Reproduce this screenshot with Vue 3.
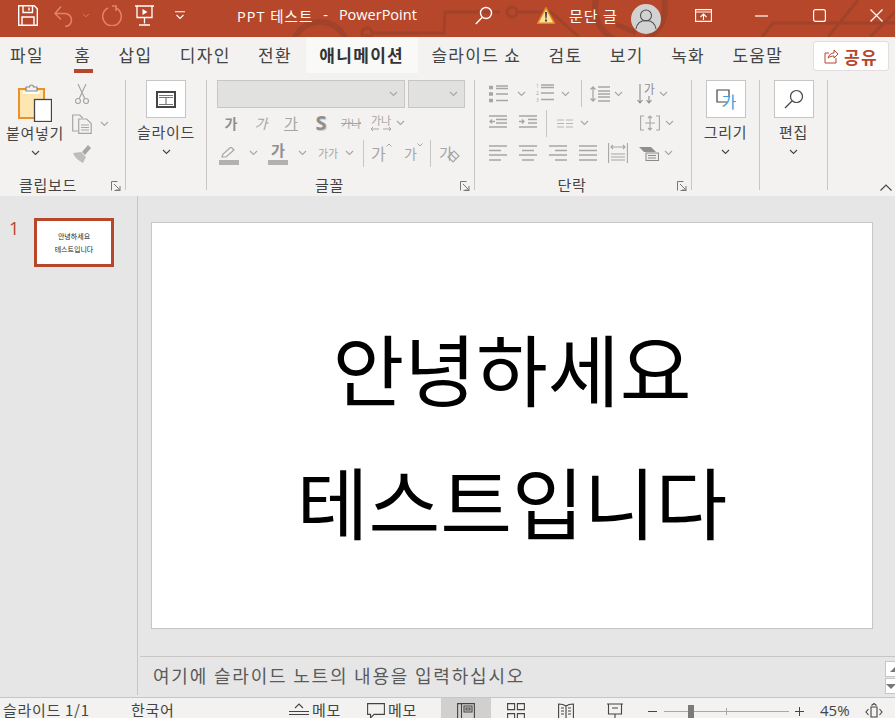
<script setup>
const tabs = [
  { label: '파일' }, { label: '홈', current: true }, { label: '삽입' }, { label: '디자인' }, { label: '전환' },
  { label: '애니메이션', active: true }, { label: '슬라이드 쇼' }, { label: '검토' }, { label: '보기' }, { label: '녹화' }, { label: '도움말' }
]
</script>

<template>
  <div class="app">
    <svg class="sprite" width="0" height="0">
      <symbol id="chev" viewBox="0 0 9 6"><path d="M1 1l3.5 3.5L8 1" fill="none" stroke="currentColor" stroke-width="1.1"/></symbol>
      <symbol id="launch" viewBox="0 0 10 10"><path d="M.5 9.5V.5h6M3 3l5.5 5.5M5 9h4V5M9.5 9.5h-6" fill="none" stroke="currentColor"/></symbol>
    </svg>

    <header class="titlebar">
      <svg class="circuit" width="895" height="37" viewBox="0 0 895 37" fill="none" stroke="#a0432a" stroke-width="3">
        <circle cx="320" cy="50" r="28" stroke-width="6"/>
        <path d="M367 37v-3M372 33h72l1-21h55M517 12h34l28 25"/>
        <circle cx="367" cy="33" r="5"/>
        <circle cx="512" cy="12" r="5"/>
        <circle cx="630" cy="8" r="35" stroke-width="6"/>
        <path d="M616 24l20 9" stroke-width="5"/>
        <path d="M762 37l11-14h122M828 37l30-37M870 37l25-25"/>
      </svg>
      <svg class="ti ti-save" width="20" height="21" viewBox="0 0 20 21" fill="none" stroke="#fff" stroke-width="1.4"><path d="M.7.7h15.6l3 3v16.600H.7zM5 .7v6.800h9.500V.7M4 20v-8h12v8M11 2.500v3"/></svg>
      <svg class="ti ti-undo" width="19" height="22" viewBox="0 0 19 22" fill="none" stroke="#e2836b" stroke-width="1.5"><path d="M1 8.500h10a6.500 6.500 0 0 1 0 13M7 1.500L1 8.500l6 6"/></svg>
      <svg class="ti ti-uc" width="8" height="5" viewBox="0 0 9 6" color="#e2836b"><use href="#chev"/></svg>
      <svg class="ti ti-redo" width="21" height="21" viewBox="0 0 21 21" fill="none" stroke="#e2836b" stroke-width="1.500"><path d="M10 1h5M14 1v5M14 3a9.300 9.300 0 1 1-8 0"/></svg>
      <svg class="ti ti-pres" width="19" height="21" viewBox="0 0 19 21" fill="none" stroke="#fff" stroke-width="1.300"><path d="M0 1h19M2 1v11.500h15V1M9.500 12.500v6M4 20h11"/><path d="M7.500 4l5 3-5 3z" fill="#fff" stroke="none"/></svg>
      <svg class="ti ti-more" width="10" height="9" viewBox="0 0 10 9" fill="none" stroke="#fff" stroke-width="1.100"><path d="M0 .7h10M1.500 4l3.500 3.500L8.500 4"/></svg>
      <div class="doc-title"><span class="doc-name">PPT 테스트</span><span class="dash">-</span><span>PowerPoint</span></div>
      <svg class="ti ti-search" width="18" height="19" viewBox="0 0 18 19" fill="none" stroke="#fff" stroke-width="1.400"><circle cx="11" cy="7" r="5.500"/><path d="M7 11.500L.8 18"/></svg>
      <svg class="ti ti-warn" width="18" height="17" viewBox="0 0 18 17"><path d="M9 .8l8.300 15.400H.7z" fill="#fce29a" stroke="#e08a1e" stroke-width="1.500"/><path d="M8 5h2l-.4 6.500H8.400zM8 12.500h2v2H8z" fill="#3c3c3c"/></svg>
      <span class="warn-text">문단 글</span>
      <div class="avatar">
        <svg width="30" height="30" viewBox="0 0 30 30" fill="none" stroke="#4f4f4f" stroke-width="1.100"><circle cx="15" cy="11.500" r="5.500"/><path d="M5 25c1-6 5-8.500 10-8.500s9 2.500 10 8.500"/></svg>
      </div>
      <svg class="ti ti-disp" width="17" height="13" viewBox="0 0 17 13" fill="none" stroke="#fff" stroke-width="1.100"><path d="M.6.600h15.800v11.800H.6zM.6 3h15.800" /><path d="M8.500 11V5.500M5.500 8l3-3 3 3"/></svg>
      <svg class="ti ti-min" width="13" height="2" viewBox="0 0 13 2"><path d="M0 1h13" stroke="#fff" stroke-width="1.200"/></svg>
      <svg class="ti ti-max" width="13" height="13" viewBox="0 0 13 13" fill="none" stroke="#fff" stroke-width="1.200"><rect x=".6" y=".6" width="11.800" height="11.800" rx="2"/></svg>
      <svg class="ti ti-close" width="13" height="13" viewBox="0 0 13 13" fill="none" stroke="#fff" stroke-width="1.200"><path d="M.5.500l12 12M12.500.500l-12 12"/></svg>
    </header>

    <nav class="tabs">
      <div v-for="tab in tabs" :key="tab.label" class="tab" :class="{ active: tab.active, current: tab.current }">{{ tab.label }}</div>
      <button class="share">
        <svg width="15" height="15" viewBox="0 0 15 15" fill="none" stroke="#b7472a" stroke-width="1"><path d="M5 4H1v10h11V9M4 9c1-3 3-5 6-5V1l4 4-4 4V7c-2 0-4 .5-6 2z"/></svg>
        공유
      </button>
    </nav>

    <section class="ribbon">
      <div class="group g-clip">
        <div class="body clip-body">
          <div class="big">
            <svg class="paste" width="34" height="38" viewBox="0 0 34 38">
              <rect x="1" y="5" width="25" height="29" fill="#fde6b0" stroke="#e8912d" stroke-width="2"/>
              <path d="M5 7h17v3H5z" fill="#fff"/>
              <path d="M8 7V3h3.500a2 2 0 0 1 4 0H19v4z" fill="#f3f2f1" stroke="#8a8886" stroke-width="1.200"/>
              <rect x="16.500" y="15.500" width="17" height="22" fill="#fff" stroke="#444" stroke-width="1.300"/>
            </svg>
            <span class="big-label paste-label">붙여넣기</span>
            <svg class="bchev"><use href="#chev"/></svg>
          </div>
          <div class="clip-small">
            <svg width="14" height="20" viewBox="0 0 14 20" fill="none" stroke="#a6a6a6" stroke-width="1.200"><circle cx="3" cy="17" r="2.500"/><circle cx="11" cy="17" r="2.500"/><path d="M4 15L11 0M10 15L3 0"/></svg>
            <div class="copy-row">
              <svg width="20" height="20" viewBox="0 0 20 20" fill="none" stroke="#a6a6a6" stroke-width="1.200"><path d="M6 17H.7V1h7l3 3"/><path d="M6.700 5h8l4.500 4.500V19.300H6.700zM9 11h8M9 13.500h8M9 16h8"/></svg>
              <svg class="schev"><use href="#chev"/></svg>
            </div>
            <svg width="20" height="19" viewBox="0 0 20 19"><path d="M1 9l8-1 5 5-3 6C7 17 3 14 1 9z" fill="#bdbdbd"/><path d="M10 8l6-7 3 3-6 7z" fill="#a6a6a6"/></svg>
          </div>
        </div>
        <div class="label clip-label">클립보드</div>
        <svg class="launch"><use href="#launch"/></svg>
      </div>

      <div class="group g-slide">
        <div class="big">
          <div class="btn-box">
            <svg width="20" height="17" viewBox="0 0 20 17" fill="none" stroke="#444"><rect x="1" y="1" width="18" height="15" stroke-width="2"/><path d="M3 4.500h14M3 6.500h14M3 13.500h14M10 6.500v7" stroke="#777" stroke-width="1.200"/></svg>
          </div>
          <span class="big-label">슬라이드</span>
          <svg class="bchev"><use href="#chev"/></svg>
        </div>
      </div>

      <div class="group g-font">
        <div class="font-boxes"><div class="select name"><svg class="schev"><use href="#chev"/></svg></div><div class="select size"><svg class="schev"><use href="#chev"/></svg></div></div>
        <div class="row font-r2">
          <span class="cell w30 glyph b">가</span>
          <span class="cell w30 glyph i">가</span>
          <span class="cell w30 glyph u">가</span>
          <span class="cell w30 glyph s-shadow">S</span>
          <span class="cell w30 glyph strike">가나</span>
          <span class="cell w30 spacing"><span>가나</span><svg width="22" height="6" viewBox="0 0 22 6" fill="none" stroke="#a6a6a6"><path d="M1 3h8M3 1L1 3l2 2M13 3h8M19 1l2 2-2 2"/></svg></span>
          <svg class="schev"><use href="#chev"/></svg>
        </div>
        <div class="row font-r3">
          <span class="cell w24 hl">
            <svg width="20" height="12" viewBox="0 0 20 12" fill="none" stroke="#a6a6a6" stroke-width="1.200"><path d="M3 10l1-3 8-7 3 3-8 7z"/></svg>
            <i class="colorbar"></i>
          </span>
          <span class="cell w25"><svg class="schev"><use href="#chev"/></svg></span>
          <span class="cell w24 hl"><span class="glyph b big-ga">가</span><i class="colorbar"></i></span>
          <span class="cell w25"><svg class="schev"><use href="#chev"/></svg></span>
          <span class="smallcaps">가가</span>
          <span class="cell w16"><svg class="schev"><use href="#chev"/></svg></span>
          <i class="vsep"></i>
          <span class="sz up">가<svg width="6" height="4" viewBox="0 0 6 4" fill="none" stroke="#a6a6a6"><path d="M.5 3.500L3 1l2.500 2.500"/></svg></span>
          <span class="sz dn">가<svg width="6" height="4" viewBox="0 0 6 4" fill="none" stroke="#a6a6a6"><path d="M.5.500L3 3 5.500.500"/></svg></span>
          <i class="vsep v2"></i>
          <span class="clear">가<svg width="13" height="13" viewBox="0 0 13 13" fill="none" stroke="#a6a6a6" stroke-width="1.200"><path d="M1 7l6-6 5 5-6 6zM4 4l5 5"/></svg></span>
        </div>
        <div class="label">글꼴</div>
        <svg class="launch"><use href="#launch"/></svg>
      </div>

      <div class="group g-para">
        <div class="para-rows">
          <div class="row pr">
            <svg class="pi ml14" width="19" height="18" viewBox="0 0 19 18" fill="none" stroke="#a6a6a6" stroke-width="1.300"><path d="M0 2.500h4M0 9h4M0 15.500h4" stroke-width="3.400"/><path d="M7 1h12M7 3.500h12M7 9h12M7 15.500h12"/></svg>
            <span class="cell w26"><svg class="schev"><use href="#chev"/></svg></span>
            <span class="num"><span>1<br>2<br>3</span><svg width="13" height="18" viewBox="0 0 13 18" stroke="#a6a6a6" stroke-width="1.300"><path d="M0 1h13M0 3.500h13M0 9h13M0 15.500h13"/></svg></span>
            <span class="cell w24"><svg class="schev"><use href="#chev"/></svg></span>
            <i class="vsep v3"></i>
            <svg class="pi ml8" width="20" height="18" viewBox="0 0 20 18" fill="none" stroke="#a6a6a6" stroke-width="1.300"><path d="M3 2v14M.5 4.500L3 2l2.500 2.500M.5 13.500L3 16l2.500-2.500M8 2h12M8 6h12M8 9h12M8 12h12M8 16h12"/></svg>
            <span class="cell w18"><svg class="schev"><use href="#chev"/></svg></span>
            <span class="textdir"><svg width="18" height="20" viewBox="0 0 18 20" fill="none" stroke="#8a8a8a" stroke-width="1.100"><path d="M3 0v19M.5 16L3 19l2.500-3M12 12v7M9.500 16l2.500 3 2.500-3"/></svg><span>가</span></span>
            <span class="cell w18"><svg class="schev"><use href="#chev"/></svg></span>
          </div>
          <div class="row pr">
            <svg class="pi ml14 lift" width="18" height="13" viewBox="0 0 18 13" fill="none" stroke="#a6a6a6" stroke-width="1.300"><path d="M0 1h18M7 4.500h11M7 8h11M0 12h18M6 6.500H1M3 4.500l-2 2 2 2"/></svg>
            <svg class="pi ml12 lift" width="18" height="13" viewBox="0 0 18 13" fill="none" stroke="#a6a6a6" stroke-width="1.300"><path d="M0 1h18M9 4.500h9M9 8h9M0 12h18M0 6.500h5M3 4.500l2 2-2 2"/></svg>
            <i class="vsep v4"></i>
            <svg class="pi ml10" width="16" height="9" viewBox="0 0 16 9" stroke="#b5b5b5" stroke-width="1.200"><path d="M0 1h7M0 4.500h7M0 8h7M9 1h7M9 4.500h7M9 8h7"/></svg>
            <span class="cell w22"><svg class="schev"><use href="#chev"/></svg></span>
            <svg class="pi ml45" width="20" height="16" viewBox="0 0 20 16" fill="none" stroke="#a6a6a6" stroke-width="1.100"><path d="M4 1H.6v14H4M16 1h3.400v14H16M10 1v14M8 3l2-2 2 2M8 13l2 2 2-2M5 8h10"/></svg>
            <span class="cell w18"><svg class="schev"><use href="#chev"/></svg></span>
          </div>
          <div class="row pr">
            <svg class="pi ml14" width="18" height="16" viewBox="0 0 18 16" stroke="#a6a6a6" stroke-width="1.300"><path d="M0 1h18M0 5.500h12M0 10h18M0 15h12"/></svg>
            <svg class="pi ml12" width="18" height="16" viewBox="0 0 18 16" stroke="#a6a6a6" stroke-width="1.300"><path d="M0 1h18M3 5.500h12M0 10h18M3 15h12"/></svg>
            <svg class="pi ml12" width="18" height="16" viewBox="0 0 18 16" stroke="#a6a6a6" stroke-width="1.300"><path d="M0 1h18M6 5.500h12M0 10h18M6 15h12"/></svg>
            <svg class="pi ml12" width="18" height="16" viewBox="0 0 18 16" stroke="#a6a6a6" stroke-width="1.300"><path d="M0 1h18M0 5.500h18M0 10h18M0 15h18"/></svg>
            <svg class="pi ml11" width="20" height="20" viewBox="0 0 20 20" fill="none" stroke="#a6a6a6" stroke-width="1.100"><path d="M.6 0v20M19.400 0v20M3 11h14M3 14h14M3 17h14M3 4h14M5 2L3 4l2 2M15 2l2 2-2 2"/></svg>
            <svg class="pi ml11" width="20" height="15" viewBox="0 0 20 15"><path d="M0 1h12l5 5H5z" fill="#8f8f8f"/><rect x="7" y="7" width="12.500" height="7.500" fill="#eee" stroke="#8a8a8a"/><path d="M9 9.500h8M9 12h8" stroke="#8a8a8a"/></svg>
            <span class="cell w18"><svg class="schev"><use href="#chev"/></svg></span>
          </div>
        </div>
        <div class="label">단락</div>
        <svg class="launch"><use href="#launch"/></svg>
      </div>

      <div class="group g-tool">
        <div class="big">
          <div class="btn-box">
            <svg width="20" height="20" viewBox="0 0 20 20" fill="none" stroke="#444" stroke-width="1.200"><path d="M11 13H1V1h12v7"/></svg>
            <span class="draw-ga">가</span>
          </div>
          <span class="big-label">그리기</span>
          <svg class="bchev"><use href="#chev"/></svg>
        </div>
      </div>
      <div class="group g-tool">
        <div class="big">
          <div class="btn-box">
            <svg width="20" height="20" viewBox="0 0 20 20" fill="none" stroke="#444" stroke-width="1.200"><circle cx="12.500" cy="7.500" r="6"/><path d="M8 12l-7 7"/></svg>
          </div>
          <span class="big-label">편집</span>
          <svg class="bchev"><use href="#chev"/></svg>
        </div>
      </div>
      <svg class="collapse" width="12" height="7" viewBox="0 0 12 7" fill="none" stroke="#444" stroke-width="1.100"><path d="M.5 6.500L6 1l5.500 5.500"/></svg>
    </section>

    <main class="main">
      <aside class="sidebar">
        <span class="slide-no">1</span>
        <div class="thumb"><span>안녕하세요</span><span>테스트입니다</span></div>
      </aside>
      <div class="editor">
        <div class="canvas">
          <div class="slide"><p>안녕하세요</p><p>테스트입니다</p></div>
        </div>
        <div class="notes">
          <span>여기에 슬라이드 노트의 내용을 입력하십시오</span>
          <div class="scroll">
            <div class="sbtn"><i class="tri up"></i></div>
            <div class="sbtn"><i class="tri down"></i></div>
          </div>
        </div>
      </div>
    </main>

    <footer class="status">
      <span class="st-slide">슬라이드 1/1</span>
      <span class="st-lang">한국어</span>
      <svg class="st-i notes-i" width="20" height="14" viewBox="0 0 20 14" fill="none" stroke="#444" stroke-width="1.100"><path d="M0 8.500h20M0 11.500h20M6 5l4-4 4 4"/></svg>
      <span class="st-memo">메모</span>
      <svg class="st-i comment-i" width="18" height="16" viewBox="0 0 18 16" fill="none" stroke="#444" stroke-width="1.100"><path d="M.6.600h16.800v10.800H7L3.500 15v-3.600H.6z"/></svg>
      <span class="st-memo">메모</span>
      <div class="view-active"><svg width="18" height="18" viewBox="0 0 18 18" fill="none" stroke="#444" stroke-width="1.100"><path d="M.6.600h16.800v17H.6zM4.500.600v17M7 3h8v6H7zM9 5h4v2H9z"/></svg></div>
      <svg class="st-i sorter" width="18" height="18" viewBox="0 0 18 18" fill="none" stroke="#444" stroke-width="1.100"><path d="M.6.600h7v6h-7zM10.400.600h7v6h-7zM.6 10.600h7v6h-7zM10.400 10.600h7v6h-7z"/></svg>
      <svg class="st-i reading" width="16" height="18" viewBox="0 0 16 18" fill="none" stroke="#444" stroke-width="1.100"><path d="M8 3C6 1.500 3 1 .6 1v15c2.400 0 5.400.5 7.400 2 2-1.500 5-2 7.400-2V1C13 1 10 1.500 8 3zM8 3v15M3 5h3M3 8h3M3 11h3M10 5h3M10 8h3M10 11h3"/></svg>
      <svg class="st-i present" width="16" height="18" viewBox="0 0 16 18" fill="none" stroke="#444" stroke-width="1.100"><path d="M0 1h16M1.500 1v10h13V1M8 11v5M3 17h10M5 5h6"/></svg>
      <div class="zoom">
        <span class="zm minus"></span>
        <div class="slider"><i class="thumb-bar"></i><i class="tick"></i></div>
        <span class="zm plus"></span>
        <span class="pct">45%</span>
      </div>
      <svg class="st-i fit" width="18" height="18" viewBox="0 0 18 18" fill="none" stroke="#444" stroke-width="1.100"><path d="M6 4h6v10H6zM3.500 6L1 9l2.500 3M14.500 6L17 9l-2.500 3M6.500 2.500L9 .5l2.500 2M6.500 15.500l2.500 2 2.500-2"/></svg>
    </footer>
  </div>
</template>

<style>
html, body { margin: 0; background: #e6e6e6; }
</style>

<style scoped>
.app {
  width: 895px; height: 718px; overflow: hidden; display: flex; flex-direction: column;
  font-family: "Noto Sans CJK KR", "Open Sans", sans-serif; color: #444; background: #e6e6e6;
}
.sprite { position: absolute; }
svg { flex: none; display: block; }

.titlebar { position: relative; height: 37px; flex: none; background: #b7472a; display: flex; align-items: center; padding-bottom: 6px; box-sizing: border-box; color: #fff; overflow: hidden; }
.circuit { position: absolute; left: 0; top: 0; }
.ti, .doc-title, .warn-text, .avatar { position: relative; }
.ti-save { margin-left: 18px; }
.ti-undo { margin-left: 16px; }
.ti-uc { margin-left: 9px; }
.ti-redo { margin-left: 12px; }
.ti-pres { margin-left: 12px; }
.ti-more { margin-left: 21px; }
.doc-title { margin-left: 52px; width: 238px; font: 14.5px "Open Sans", "Noto Sans CJK KR", sans-serif; display: flex; white-space: nowrap; }
.doc-name { letter-spacing: 1px; }
.dash { margin: 0 11px 0 10px; }
.ti-search { margin-left: 0; }
.ti-warn { margin-left: 44px; }
.warn-text { margin-left: 14px; width: 62px; font-size: 15px; letter-spacing: 1px; white-space: nowrap; }
.avatar { width: 30px; height: 30px; border-radius: 50%; background: #d2d2d2; margin-top: 6px; overflow: hidden; }
.ti-disp { margin-left: 34px; }
.ti-min { margin-left: 43px; }
.ti-max { margin-left: 45px; }
.ti-close { margin-left: 44px; }

.tabs { height: 36px; flex: none; background: #f3f2f1; display: flex; align-items: stretch; position: relative; }
.tab { padding: 0 13.700px; line-height: 36px; font-size: 17px; letter-spacing: 1.300px; color: #444; white-space: nowrap; position: relative; }
.tab:first-child { margin-left: -3.700px; }
.tab.current { margin-left: 3px; }
.tab.active { background: #f9f9f8; font-weight: 700; color: #333; }
.tab.current::after { content: ""; position: absolute; left: 13px; right: 12px; bottom: 0; height: 4px; background: #b7472a; }
.share { position: absolute; left: 813px; top: 4px; width: 76px; height: 30px; box-sizing: border-box; border: 1px solid #e1dfdd; border-radius: 3px; background: #fff; color: #b7472a; font: 700 17px "Noto Sans CJK KR", sans-serif; letter-spacing: 1.300px; display: flex; align-items: center; justify-content: center; gap: 5px; padding: 0; }

.ribbon { height: 123px; flex: none; background: #f3f2f1; box-sizing: border-box; padding: 7px 0 6px; display: flex; position: relative; }
.group { position: relative; height: 110px; box-sizing: border-box; border-right: 1px solid #c8c6c4; display: flex; flex-direction: column; flex: none; }
.g-clip { width: 126px; }
.g-slide { width: 81px; }
.g-font { width: 268px; }
.g-para { width: 217px; }
.g-tool { width: 68px; }
.label { margin-top: auto; margin-bottom: -3px; line-height: 16px; text-align: center; font-size: 15px; letter-spacing: .7px; color: #444; }
.clip-label { width: 96px; }
.launch { position: absolute; right: 4px; bottom: -1px; width: 10px; height: 10px; color: #777; }
.body { display: flex; }
.big { display: flex; flex-direction: column; align-items: center; }
.btn-box { width: 40px; height: 38px; box-sizing: border-box; background: #fff; border: 1px solid #c8c6c4; display: flex; align-items: center; justify-content: center; position: relative; }
.big-label { margin-top: 6px; line-height: 16px; font-size: 15px; letter-spacing: .7px; color: #444; white-space: nowrap; }
.bchev { width: 9px; height: 6px; margin-top: 9px; color: #444; }
.schev { width: 9px; height: 6px; color: #a6a6a6; }
.clip-body { width: 125px; }
.clip-body .big { width: 70px; }
.paste { margin-top: 4px; }
.paste-label { margin-top: 3px; }
.clip-small { display: flex; flex-direction: column; gap: 10px; padding: 4px 0 0 2px; align-items: flex-start; }
.clip-small > svg:first-child { margin-left: 3px; }
.copy-row { display: flex; align-items: center; gap: 8px; }
.g-slide .big, .g-tool .big { width: 100%; }

.g-font { padding-left: 10px; }
.font-boxes { display: flex; gap: 3px; }
.select { height: 28px; box-sizing: border-box; background: #e1e1e0; border: 1px solid #c8c6c4; display: flex; align-items: center; justify-content: flex-end; padding-right: 6px; }
.select.name { width: 188px; }
.select.size { width: 57px; }
.row { display: flex; align-items: center; }
.cell { display: flex; align-items: center; justify-content: center; flex: none; }
.w30 { width: 30px; } .w24 { width: 24px; } .w25 { width: 25px; } .w16 { width: 16px; } .w26 { width: 26px; } .w18 { width: 18px; } .w22 { width: 22px; }
.font-r2 { height: 30px; margin-left: -1px; }
.font-r3 { height: 30px; }
.glyph { font-size: 14px; color: #8f8f8f; line-height: 18px; }
.big-ga { font-size: 15px; }
.b { font-weight: 700; }
.i { font-style: italic; color: #a6a6a6; }
.u { text-decoration: underline; color: #a6a6a6; font-size: 15px; }
.s-shadow { font: 700 20px/20px "Open Sans", sans-serif; color: #8f8f8f; text-shadow: 1px 1px 1px #ccc; }
.strike { text-decoration: line-through; font-size: 11px; color: #a6a6a6; }
.spacing { flex-direction: column; font-size: 11px; line-height: 11px; color: #a6a6a6; }
.hl { flex-direction: column; height: 24px; justify-content: flex-end; gap: 0; }
.colorbar { display: block; width: 20px; height: 5px; background: #b1b1b1; margin-top: 1px; }
.smallcaps { font-size: 11px; color: #a6a6a6; width: 26px; text-align: center; }
.vsep { display: block; width: 1px; height: 27px; background: #c8c6c4; margin-left: 6px; flex: none; }
.v2 { margin-left: 7px; }
.sz { display: flex; align-items: flex-start; color: #a6a6a6; line-height: 20px; flex: none; }
.up { margin-left: 7px; width: 24px; font-size: 16px; }
.dn { margin-left: 9px; width: 19px; font-size: 14px; }
.clear { display: flex; align-items: flex-end; margin-left: 8px; font-size: 15px; color: #a6a6a6; line-height: 20px; }
.clear svg { margin-left: -6px; }
.g-font .label { padding-right: 32px; }

.para-rows { display: flex; flex-direction: column; }
.pr { height: 30px; }
.g-para .pr:first-child { margin-top: -1px; height: 29px; }
.lift { margin-top: -4px; }
.ml14 { margin-left: 14px; } .ml12 { margin-left: 12px; } .ml11 { margin-left: 11px; } .ml10 { margin-left: 10px; } .ml8 { margin-left: 8px; } .ml45 { margin-left: 45px; }
.num { display: flex; align-items: center; gap: 2px; margin-left: 2px; color: #a6a6a6; font: 5px/6.800px "Open Sans", sans-serif; }
.v3 { margin-left: 3px; height: 27px; }
.v4 { margin-left: 9px; height: 27px; }
.textdir { position: relative; margin-left: 9px; }
.textdir span { position: absolute; left: 7px; top: -2px; font-size: 12px; color: #8f8f8f; line-height: 14px; }
.g-para .label { padding-right: 22px; }

.draw-ga { position: absolute; left: 15px; top: 10px; font-size: 16px; line-height: 20px; color: #3d9bdc; }
.collapse { position: absolute; right: 3px; bottom: 5px; }

.main { flex: 1; min-height: 0; display: flex; background: #e6e6e6; }
.sidebar { flex: none; margin-bottom: 2px; border-right: 1px solid #c8c6c4; display: flex; align-items: flex-start; padding: 20px 0 0 9px; width: 128px; }
.slide-no { font: 18px/24px "Open Sans", sans-serif; color: #b7472a; width: 25px; flex: none; }
.thumb { width: 80px; height: 49px; margin-top: 2px; box-sizing: border-box; border: 3px solid #b7472a; background: #fff; display: flex; flex-direction: column; align-items: center; justify-content: center; font-size: 7px; line-height: 13px; color: #222; padding-top: 1px; }
.editor { flex: 1; min-width: 0; display: flex; flex-direction: column; }
.canvas { flex: 1; min-height: 0; padding: 26px 22px 27px 13px; display: flex; box-sizing: border-box; }
.slide { flex: 1; box-sizing: border-box; background: #fff; border: 1px solid #c8c6c4; display: flex; flex-direction: column; align-items: center; padding-top: 78px; color: #000; }
.slide p { margin: 0; font-size: 78px; line-height: 133px; white-space: nowrap; }
.notes { height: 41px; flex: none; box-sizing: border-box; border-top: 1px solid #c8c6c4; margin-left: 2px; padding: 0 0 4px 13px; display: flex; align-items: center; font-size: 18px; letter-spacing: 1.800px; color: #5a5a5a; position: relative; white-space: nowrap; }
.scroll { position: absolute; right: 0; top: 4px; width: 10px; display: flex; flex-direction: column; gap: 1px; }
.sbtn { height: 16px; width: 12px; box-sizing: border-box; background: #fff; border: 1px solid #c8c6c4; display: flex; align-items: center; justify-content: center; }
.tri { width: 0; height: 0; border-left: 5px solid transparent; border-right: 5px solid transparent; }
.tri.up { border-bottom: 5px solid #777; }
.tri.down { border-top: 5px solid #777; }

.status { height: 21px; flex: none; box-sizing: border-box; background: #f3f2f1; border-top: 1px solid #c8c6c4; display: flex; align-items: flex-start; color: #444; font-size: 15px; letter-spacing: .7px; line-height: 24px; overflow: hidden; white-space: nowrap; }
.st-slide { margin-left: 3px; width: 128px; }
.st-lang { width: 158px; }
.st-i { margin-top: 5px; }
.st-memo { margin-left: 3px; }
.comment-i { margin-left: 26px; margin-top: 5px; }
.view-active { margin-left: 24px; width: 50px; height: 21px; background: #d2d0ce; display: flex; justify-content: center; padding-top: 5px; box-sizing: border-box; }
.sorter { margin-left: 16px; }
.reading { margin-left: 33px; }
.present { margin-left: 33px; }
.zoom { display: flex; align-items: flex-start; margin-left: 25px; }
.zm { position: relative; width: 10px; height: 14px; display: block; }
.zm::before { content: ""; position: absolute; left: 0; top: 13px; width: 9px; height: 1px; background: #444; }
.plus::after { content: ""; position: absolute; left: 4px; top: 9px; width: 1px; height: 9px; background: #444; }
.slider { position: relative; width: 125px; height: 1px; background: #a8a8a8; margin: 13px 6px 0 6px; }
.thumb-bar { position: absolute; left: 24px; top: -6px; width: 6px; height: 14px; background: #7a7a7a; }
.tick { position: absolute; left: 62px; top: -3px; width: 1px; height: 7px; background: #a8a8a8; }
.pct { margin-left: 15px; font: 15px/24px "Open Sans", sans-serif; letter-spacing: 0; }
.fit { margin-left: 15px; }
</style>
